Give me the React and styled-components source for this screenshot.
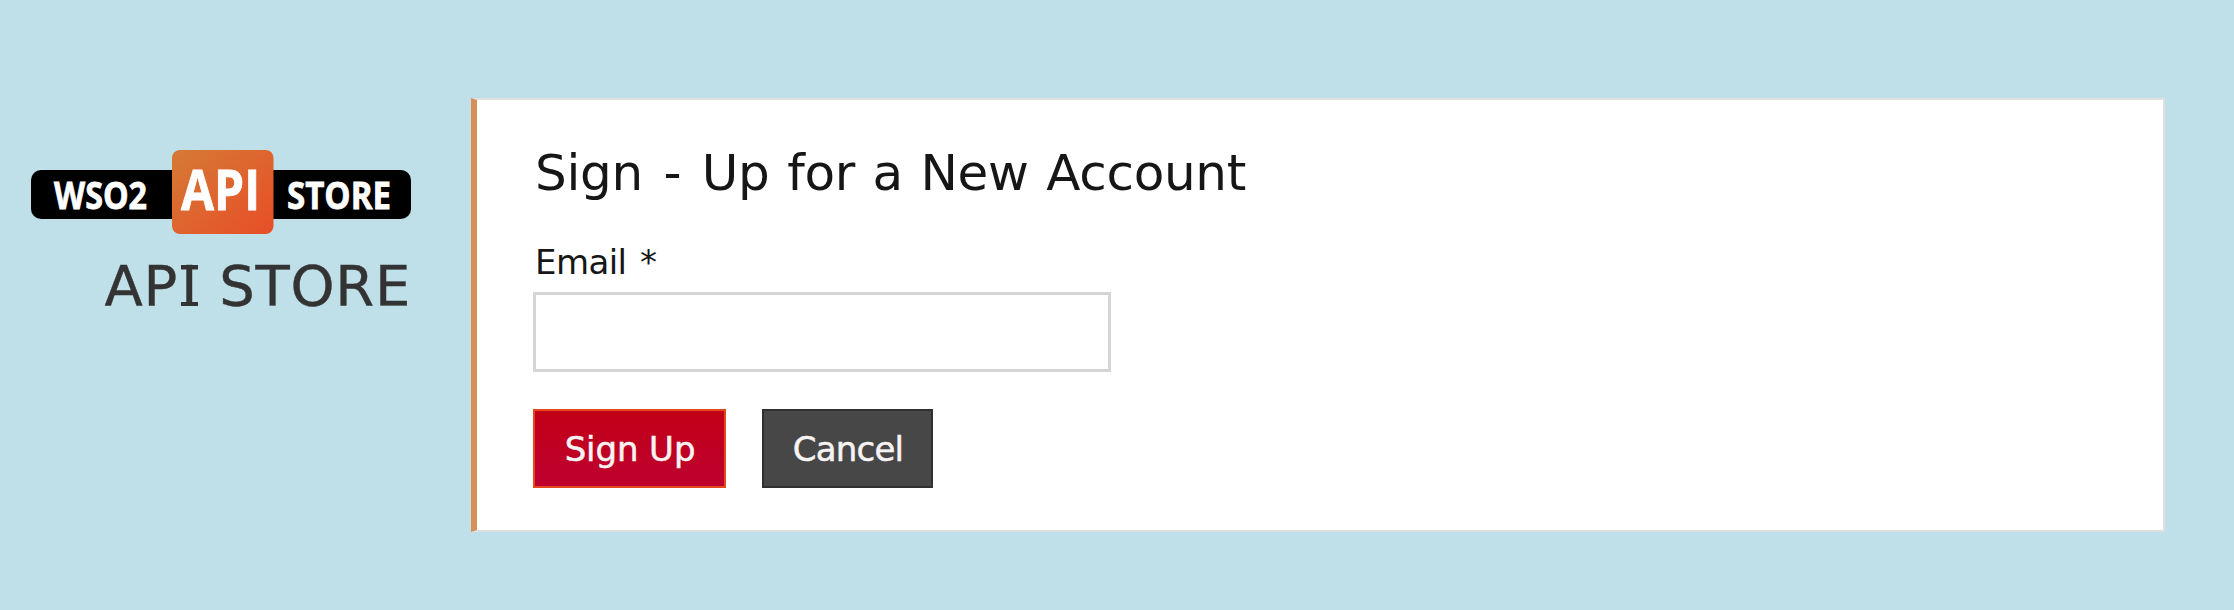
import React from 'react';
import styled, { createGlobalStyle } from 'styled-components';

const GlobalStyle = createGlobalStyle`
  * { box-sizing: border-box; }
  body {
    margin: 0;
    background: #bfdfe9;
    font-family: Verdana, "DejaVu Sans", sans-serif;
  }
`;

const Page = styled.div`
  display: flex;
  align-items: flex-start;
  height: 610px;
  padding: 98px 69px 0 31px;
`;

const Brand = styled.header`
  display: flex;
  flex-direction: column;
  align-items: flex-end;
  width: 380px;
  margin-right: 60px;
  padding-top: 52px;
`;

const Logo = styled.svg`
  display: block;
  width: 380px;
  height: 84px;
`;

const LogoText = styled.text`
  fill: #fff;
  stroke: #fff;
  stroke-width: 0.8px;
  font-family: "Open Sans", sans-serif;
  font-weight: 700;
  font-size: ${(p) => p.$size}px;
`;

const StoreName = styled.div`
  margin-top: 22px;
  color: #333;
  font-size: 56px;
  line-height: 60px;
  letter-spacing: 0.7px;
  white-space: nowrap;
  -webkit-text-stroke: 0.4px #333;
`;

const SerifI = styled.span`
  display: inline-block;
  width: 17px;
  height: 41px;
  line-height: 41px;
  margin: 0 3px;
  text-align: center;
  letter-spacing: 0;
  background:
    linear-gradient(#333, #333) top / 100% 4.5px no-repeat,
    linear-gradient(#333, #333) bottom / 100% 4.5px no-repeat;
  vertical-align: baseline;
`;

const Card = styled.main`
  flex: 1;
  height: 434px;
  padding: 43px 0 0 56px;
  background: #fff;
  border: 2px solid #e0e0e0;
  border-left: 6px solid #d69057;
`;

const Title = styled.h1`
  margin: 0 0 39px 2px;
  color: #161616;
  font-size: 50px;
  font-weight: 400;
  line-height: 60px;
  letter-spacing: -0.3px;
  word-spacing: 2px;
  white-space: nowrap;
`;

const Dash = styled.span`
  padding: 0 3px;
`;

const Label = styled.label`
  display: block;
  margin: 0 0 10px 2px;
  color: #161616;
  font-size: 34px;
  line-height: 40px;
  letter-spacing: -0.6px;
  word-spacing: 3.5px;
`;

const Input = styled.input`
  display: block;
  width: 578px;
  height: 80px;
  padding: 0 16px;
  border: 3px solid #d5d5d5;
  border-radius: 0;
  outline: none;
  background: #fff;
  font: inherit;
  font-size: 34px;
`;

const Actions = styled.div`
  display: flex;
  gap: 36px;
  margin-top: 37px;
`;

const Button = styled.button`
  width: ${(p) => p.$width}px;
  height: 79px;
  padding: 0 0 0 1px;
  border: 2px solid ${(p) => p.$edge};
  background: ${(p) => p.$fill};
  color: #f7f3f3;
  font: inherit;
  font-size: 34px;
  letter-spacing: ${(p) => p.$tracking}px;
  -webkit-text-stroke: 0.5px #f7f3f3;
`;

export default function App() {
  return (
    <>
      <GlobalStyle />
      <Page>
        <Brand>
          <Logo viewBox="0 0 380 84" role="img" aria-label="WSO2 API Store">
            <defs>
              <linearGradient id="tile" x1="0" y1="0" x2="1" y2="1">
                <stop offset="0" stopColor="#d57a35" />
                <stop offset="1" stopColor="#e84e27" />
              </linearGradient>
            </defs>
            <rect x="0" y="20" width="380" height="49" rx="10" fill="#000" />
            <rect x="141" y="0" width="101.5" height="84" rx="8" fill="url(#tile)" />
            <LogoText $size={38} x="23" y="59" textLength="93" lengthAdjust="spacingAndGlyphs">WSO2</LogoText>
            <LogoText $size={55} x="150" y="59.5" textLength="79" lengthAdjust="spacingAndGlyphs">API</LogoText>
            <LogoText $size={38} x="256" y="59" textLength="104" lengthAdjust="spacingAndGlyphs">STORE</LogoText>
          </Logo>
          <StoreName>AP<SerifI>I</SerifI> STORE</StoreName>
        </Brand>
        <Card>
          <Title>Sign <Dash>-</Dash> Up for a New Account</Title>
          <Label htmlFor="email">Email *</Label>
          <Input id="email" type="text" />
          <Actions>
            <Button $width={193} $tracking={-0.1} $edge="#e5481f" $fill="linear-gradient(#c10016, #be0030)">Sign Up</Button>
            <Button $width={171} $tracking={-0.8} $edge="#303030" $fill="#474747">Cancel</Button>
          </Actions>
        </Card>
      </Page>
    </>
  );
}
